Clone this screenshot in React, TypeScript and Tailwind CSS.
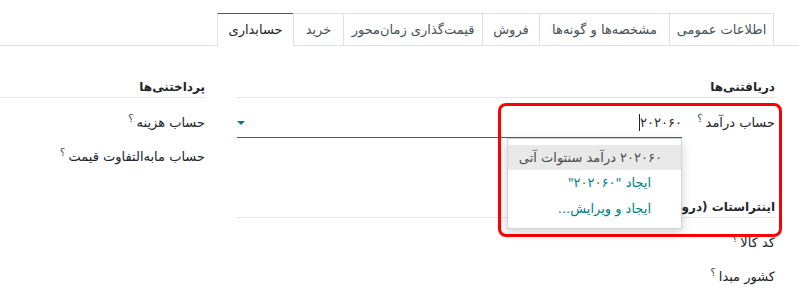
const tabs = [
  { label: "اطلاعات عمومی", w: "w-[105px]" },
  { label: "مشخصه‌ها و گونه‌ها", w: "w-[130px]" },
  { label: "فروش", w: "w-[57px]" },
  { label: "قیمت‌گذاری زمان‌محور", w: "w-[139px]" },
  { label: "خرید", w: "w-[50px]" },
];

function Help() {
  return <sup className="mr-[3px] text-[10px] text-[#374151]">؟</sup>;
}

function SectionHeader({ title, className = "" }: { title: string; className?: string }) {
  return (
    <div className={`h-[21px] border-b border-[#e5e7eb] font-semibold leading-[20px] text-[12px] ${className}`}>
      {title}
    </div>
  );
}

function Label({ text, w = "" }: { text: string; w?: string }) {
  return (
    <div className={`h-[34px] shrink-0 leading-[34px] whitespace-nowrap ${w}`}>
      {text}
      <Help />
    </div>
  );
}

export default function App() {
  return (
    <div
      dir="rtl"
      className="relative h-[304px] w-[799px] overflow-hidden bg-white text-[13px] text-[#212529] font-['DejaVu_Sans',sans-serif]"
    >
      {/* tabs */}
      <div className="flex border-b border-[#dee2e6] pr-[25px] pt-[13px]">
        {tabs.map((t, i) => (
          <div
            key={t.label}
            className={`flex h-[32px] items-center justify-center whitespace-nowrap border-t border-l border-[#dee2e6] text-[#495057] ${t.w} ${
              i === 0 ? "border-r" : ""
            }`}
          >
            {t.label}
          </div>
        ))}
        <div className="relative -mb-px flex h-[33px] w-[76px] items-center justify-center border-t border-l border-t-[#714b67] border-l-[#dee2e6] bg-white text-[#212529]">
          حسابداری
        </div>
      </div>

      {/* groups */}
      <div className="flex gap-[32px] pr-[24px] pt-[31px]">
        <div className="w-[538px] shrink-0">
          <SectionHeader title="دریافتنی‌ها" />
          <div className="mt-[8px] flex h-[34px]">
            <Label text="حساب درآمد" w="w-[93px]" />
            <div className="flex h-[32px] flex-1 items-center justify-between border-b border-[#017e84] pt-[2px]">
              <div className="flex items-center">
                <span>۲۰۲۰۶۰</span>
                <span className="inline-block h-[17px] w-px bg-[#222]" />
              </div>
              <svg width="8" height="5" viewBox="0 0 8 5" className="mt-[2px]">
                <polygon points="0,0 8,0 4,4" fill="#017e84" />
              </svg>
            </div>
          </div>

          <SectionHeader title="اینتراستات (درون کشوری)" className="mt-[57px]" />
          <div className="mt-[8px]">
            <Label text="کد کالا" />
            <Label text="کشور مبدا" />
          </div>
        </div>

        <div className="w-[538px] shrink-0">
          <SectionHeader title="پرداختنی‌ها" />
          <div className="mt-[8px]">
            <Label text="حساب هزینه" />
            <Label text="حساب مابه‌التفاوت قیمت" />
          </div>
        </div>
      </div>

      {/* highlight frame */}
      <div className="absolute left-[498px] top-[103px] h-[134px] w-[284px] rounded-[8px] border-[3px] border-[#ff0000]" />

      {/* autocomplete menu */}
      <div className="absolute left-[507px] top-[138px] w-[175px] border border-[#d1d5db] bg-white py-[6px] shadow-[0_4px_10px_rgba(0,0,0,0.18)]">
        <div className="flex h-[25px] items-center bg-[#e9e9e9] pr-[19px] text-[#4b4b4b]">
          ۲۰۲۰۶۰ درآمد سنتوات آتی
        </div>
        <div className="flex h-[26px] items-center pr-[30px] text-[#017e84]">ایجاد "۲۰۲۰۶۰"</div>
        <div className="flex h-[26px] items-center pr-[30px] text-[#017e84]">ایجاد و ویرایش...</div>
      </div>
    </div>
  );
}
